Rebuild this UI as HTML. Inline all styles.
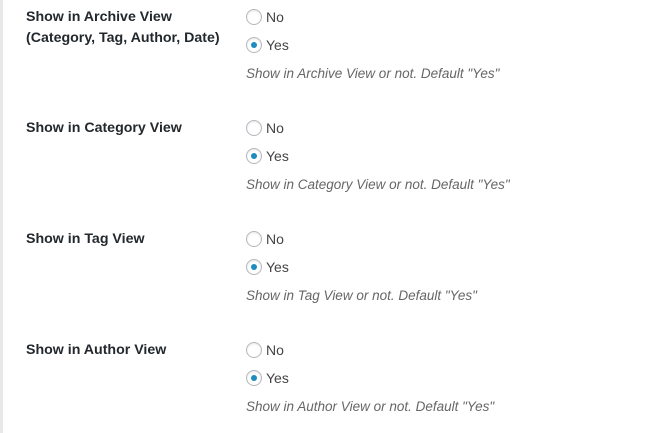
<!DOCTYPE html>
<html><head><style>
body{margin:0;width:649px;height:433px;background:#fff;position:relative;overflow:hidden;font-family:"Liberation Sans",sans-serif;font-size:13px;color:#222}
.bar{position:absolute;left:0;top:0;width:3px;height:433px;background:#e8e8e8}
.l{position:absolute;left:26px;font-weight:bold;color:#23282d;line-height:21px;font-size:14.2px}
.r{position:absolute;left:246px;width:16px;height:16px;box-sizing:border-box;border:1px solid #b4b9be;border-radius:50%;background:#fff;box-shadow:inset 0 1px 2px rgba(0,0,0,.1)}
.r.c::after{content:"";position:absolute;left:4px;top:4px;width:6px;height:6px;border-radius:50%;background:#1e8cbe}
.t{position:absolute;left:266px;line-height:16px;color:#444;font-size:14px}
.d{position:absolute;left:246px;font-style:italic;color:#666;font-size:13.5px;line-height:16px}
</style></head><body>
<div class="bar"></div>

<div class="l" style="top:7px">Show in Archive View<br>(Category, Tag, Author, Date)</div>
<div class="r" style="top:9px"></div><div class="t" style="top:9px">No</div>
<div class="r c" style="top:37px"></div><div class="t" style="top:37px">Yes</div>
<div class="d" style="top:66px">Show in Archive View or not. Default "Yes"</div>

<div class="l" style="top:118px">Show in Category View</div>
<div class="r" style="top:120px"></div><div class="t" style="top:120px">No</div>
<div class="r c" style="top:148px"></div><div class="t" style="top:148px">Yes</div>
<div class="d" style="top:177px">Show in Category View or not. Default "Yes"</div>

<div class="l" style="top:229px">Show in Tag View</div>
<div class="r" style="top:231px"></div><div class="t" style="top:231px">No</div>
<div class="r c" style="top:259px"></div><div class="t" style="top:259px">Yes</div>
<div class="d" style="top:288px">Show in Tag View or not. Default "Yes"</div>

<div class="l" style="top:340px">Show in Author View</div>
<div class="r" style="top:342px"></div><div class="t" style="top:342px">No</div>
<div class="r c" style="top:370px"></div><div class="t" style="top:370px">Yes</div>
<div class="d" style="top:399px">Show in Author View or not. Default "Yes"</div>
</body></html>
